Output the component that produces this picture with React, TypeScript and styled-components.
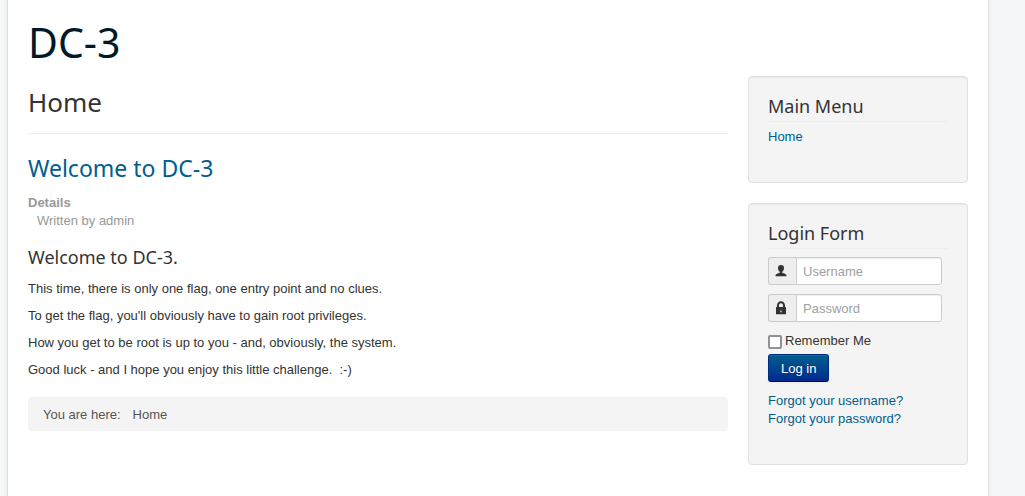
import React from 'react';
import styled, { createGlobalStyle } from 'styled-components';

const GlobalStyle = createGlobalStyle`
  *, *::before, *::after { box-sizing: border-box; }
  body {
    margin: 0;
    background: #f4f6f7;
    color: #333;
    font: 13px/18px "Liberation Sans", Arial, sans-serif;
  }
  a { color: #005e8d; text-decoration: none; }
  a:hover { text-decoration: underline; }
`;

const Page = styled.div`
  min-height: 100vh;
  margin: 0 36px 0 7px;
  padding: 18px 20px 31px;
  background: #fff;
  border: solid #ddd;
  border-width: 0 1px;
  box-shadow: 0 0 6px rgba(0, 0, 0, 0.05);
`;

const Header = styled.header`
  margin-bottom: 10px;
`;

const SiteTitle = styled.a`
  display: block;
  color: #001a27;
  font: 450 41px/48px "Noto Sans", "Open Sans", sans-serif;
`;

const Columns = styled.div`
  display: flex;
  align-items: flex-start;
  gap: 20px;
`;

const Main = styled.main`
  flex: 1;
  min-width: 0;
`;

const Sidebar = styled.aside`
  flex: 0 0 220px;
  display: flex;
  flex-direction: column;
  gap: 20px;
`;

const PageHeading = styled.h1`
  margin: 0 0 17px;
  padding: 8px 0 13px;
  border-bottom: 1px solid #eee;
  font: 450 26px/36px "Noto Sans", "Open Sans", sans-serif;
`;

const ArticleTitle = styled.h2`
  margin: 0 0 9px;
  font: 400 23px/34px "Noto Sans", "Open Sans", sans-serif;
`;

const Details = styled.dl`
  margin: 0 0 17px;
  color: #999;
  dt { font-weight: bold; }
  dd { margin: 0 0 0 9px; }
`;

const SectionTitle = styled.h3`
  margin: 0 0 13px;
  font: 450 18px/20px "Noto Sans", "Open Sans", sans-serif;
`;

const Paragraph = styled.p`
  margin: 0 0 9px;
`;

const Breadcrumbs = styled.nav`
  display: flex;
  gap: 12px;
  margin-top: 18px;
  padding: 9px 15px 7px;
  border-radius: 4px;
  background: #f4f4f4;
  color: #555;
`;

const Card = styled.section`
  padding: 19px 19px 36px;
  background: #f4f4f4;
  border: 1px solid #e0e0e0;
  border-radius: 4px;
  box-shadow: inset 0 1px 1px rgba(0, 0, 0, 0.05);
`;

const CardTitle = styled.h3`
  margin: 0 0 6px;
  padding-bottom: 5px;
  border-bottom: 1px solid #eee;
  font: 450 18px/20px "Noto Sans", "Open Sans", sans-serif;
`;

const LinkList = styled.ul`
  margin: 0;
  padding: 0;
  list-style: none;
`;

const LoginForm = styled.form`
  display: flex;
  flex-direction: column;
  align-items: flex-start;
  gap: 9px;
  margin: 8px 0 10px;
`;

const Field = styled.div`
  display: flex;
  width: 174px;
  height: 28px;
`;

const FieldIcon = styled.label`
  display: flex;
  flex: 0 0 28px;
  align-items: center;
  justify-content: center;
  padding: 0 3px 1px 0;
  border: 1px solid #ccc;
  border-right: 0;
  border-radius: 3px 0 0 3px;
  background: #eee;
`;

const TextInput = styled.input`
  flex: 1;
  min-width: 0;
  padding: 5px 6px 3px;
  border: 1px solid #ccc;
  border-radius: 0 3px 3px 0;
  background: #fff;
  box-shadow: inset 0 1px 1px rgba(0, 0, 0, 0.075);
  color: #555;
  font: inherit;
  &::placeholder { color: #a0a0a0; opacity: 1; }
`;

const Remember = styled.label`
  display: flex;
  align-items: center;
  gap: 3px;
`;

const Checkbox = styled.input`
  appearance: none;
  width: 14px;
  height: 14px;
  margin: 2px 0 0;
  border: 2px solid #8f8f9d;
  border-radius: 2px;
  background: #fff;
  &:checked { background: #005e8d; }
`;

const FormActions = styled.div`
  display: flex;
  flex-direction: column;
  align-items: flex-start;
  gap: 4px;
  padding-top: 1px;
`;

const SubmitButton = styled.button`
  height: 28px;
  padding: 5px 12px 3px;
  border: 1px solid #002a80;
  border-bottom-color: #00103f;
  border-radius: 3px;
  background: linear-gradient(#005e8d, #002a8d);
  box-shadow: inset 0 1px 0 rgba(255, 255, 255, 0.1), 0 1px 2px rgba(0, 0, 0, 0.05);
  color: #fff;
  font: inherit;
  text-shadow: 0 -1px 0 rgba(0, 0, 0, 0.25);
  cursor: pointer;
`;

const UserIcon = () => (
  <svg width="12" height="12" viewBox="0 0 12 12" fill="#333" aria-hidden="true">
    <path d="M6 0C8 0 9 1.2 9 3C9 4.8 8.3 6 7.3 6.8V8C9.5 8.4 11.6 9 11.6 11.3H0.4C0.4 9 2.5 8.4 4.7 8V6.8C3.7 6 3 4.8 3 3C3 1.2 4 0 6 0Z" />
  </svg>
);

const LockIcon = () => (
  <svg width="12" height="14" viewBox="0 0 12 14" fill="#333" aria-hidden="true">
    <path
      fillRule="evenodd"
      d="M2 6V4.4C2 2 3.7 0.3 6 0.3S10 2 10 4.4V6H11V13.2H1V6ZM4 6H8V4.4C8 3 7.2 2.2 6 2.2S4 3 4 4.4ZM5.4 9.5V11.2H6.6V9.5Z"
    />
  </svg>
);

export default function App() {
  return (
    <>
      <GlobalStyle />
      <Page>
        <Header>
          <SiteTitle href="#">DC-3</SiteTitle>
        </Header>
        <Columns>
          <Main>
            <PageHeading>Home</PageHeading>
            <article>
              <ArticleTitle>
                <a href="#">Welcome to DC-3</a>
              </ArticleTitle>
              <Details>
                <dt>Details</dt>
                <dd>Written by admin</dd>
              </Details>
              <SectionTitle>Welcome to DC-3.</SectionTitle>
              <Paragraph>This time, there is only one flag, one entry point and no clues.</Paragraph>
              <Paragraph>To get the flag, you'll obviously have to gain root privileges.</Paragraph>
              <Paragraph>How you get to be root is up to you - and, obviously, the system.</Paragraph>
              <Paragraph>Good luck - and I hope you enjoy this little challenge.&nbsp; :-)</Paragraph>
            </article>
            <Breadcrumbs aria-label="Breadcrumbs">
              <span>You are here:</span>
              <span>Home</span>
            </Breadcrumbs>
          </Main>
          <Sidebar>
            <Card>
              <CardTitle>Main Menu</CardTitle>
              <LinkList>
                <li><a href="#">Home</a></li>
              </LinkList>
            </Card>
            <Card>
              <CardTitle>Login Form</CardTitle>
              <LoginForm onSubmit={(event) => event.preventDefault()}>
                <Field>
                  <FieldIcon htmlFor="username" aria-label="Username"><UserIcon /></FieldIcon>
                  <TextInput id="username" type="text" placeholder="Username" />
                </Field>
                <Field>
                  <FieldIcon htmlFor="password" aria-label="Password"><LockIcon /></FieldIcon>
                  <TextInput id="password" type="password" placeholder="Password" />
                </Field>
                <FormActions>
                  <Remember>
                    <Checkbox type="checkbox" />
                    Remember Me
                  </Remember>
                  <SubmitButton type="submit">Log in</SubmitButton>
                </FormActions>
              </LoginForm>
              <LinkList>
                <li><a href="#">Forgot your username?</a></li>
                <li><a href="#">Forgot your password?</a></li>
              </LinkList>
            </Card>
          </Sidebar>
        </Columns>
      </Page>
    </>
  );
}
